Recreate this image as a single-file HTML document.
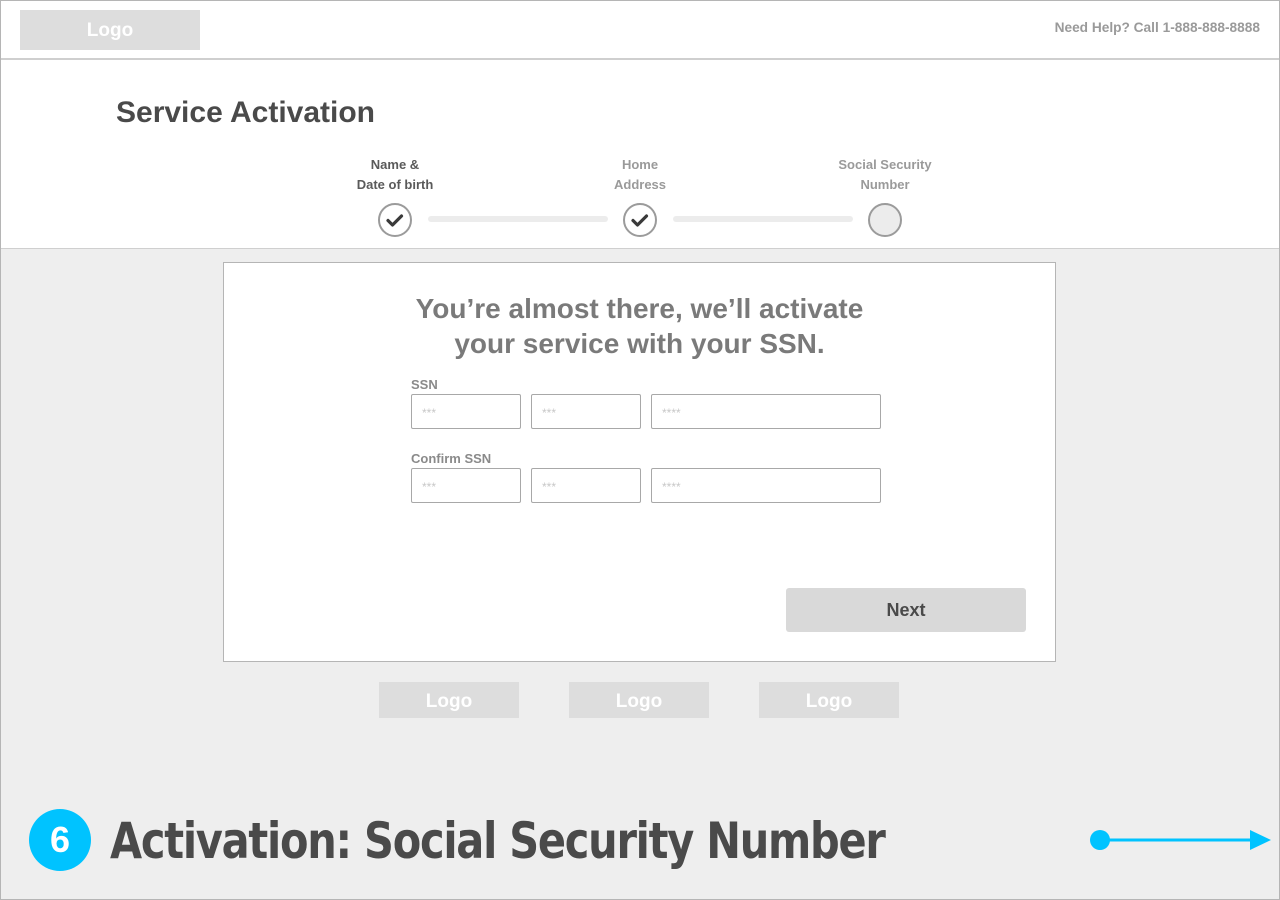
<!DOCTYPE html>
<html><head><meta charset="utf-8"><style>
*{margin:0;padding:0;box-sizing:border-box}
body{width:1280px;height:900px;position:relative;background:#eeeeee;font-family:"Liberation Sans",sans-serif;overflow:hidden}
.abs{position:absolute}
.frame{left:0;top:0;width:1280px;height:900px;border:1px solid #b5b5b5;z-index:10;pointer-events:none}
.top{left:0;top:0;width:1280px;height:249px;background:#fff;border-bottom:1px solid #cfcfcf}
.hl{left:0;top:58px;width:1280px;height:2px;background:#cfcfcf}
.logo{background:#dddddd;color:#fff;font-weight:bold;text-align:center}
.step{font-size:13px;font-weight:bold;text-align:center;line-height:20px;width:140px}
.circ{width:34px;height:34px;border:2px solid #9b9b9b;border-radius:50%;background:#fff}
.bar{height:6px;background:#ececec;border-radius:3px}
.card{left:223px;top:262px;width:833px;height:400px;background:#fff;border:1px solid #b5b5b5}
.lbl{font-size:13px;font-weight:bold;color:#8a8a8a}
.in{height:35px;border:1px solid #a8a8a8;border-radius:2px;background:#fff;color:#c8c8c8;font-size:12px;padding:12px 0 0 10px;line-height:12px}
</style></head><body>
<div class="abs top"></div>
<div class="abs hl"></div>
<div class="abs logo" style="left:20px;top:10px;width:180px;height:40px;font-size:19px;line-height:42px">Logo</div>
<div class="abs" style="right:20px;top:20px;font-size:13.7px;font-weight:bold;color:#9a9a9a">Need Help? Call 1-888-888-8888</div>
<div class="abs" style="left:116px;top:96px;font-size:30px;font-weight:bold;color:#4a4a4a">Service Activation</div>
<div class="abs step" style="left:325px;top:155px;color:#5a5a5a">Name &amp;<br>Date of birth</div>
<div class="abs step" style="left:570px;top:155px;color:#9a9a9a">Home<br>Address</div>
<div class="abs step" style="left:815px;top:155px;color:#9a9a9a">Social Security<br>Number</div>
<div class="abs circ" style="left:378px;top:203px"><svg width="30" height="30" viewBox="0 0 30 30"><path d="M8 15.5l4.5 4.5 9-9" fill="none" stroke="#3a3a3a" stroke-width="3.2" stroke-linecap="round" stroke-linejoin="round"/></svg></div>
<div class="abs bar" style="left:428px;top:216px;width:180px"></div>
<div class="abs circ" style="left:623px;top:203px"><svg width="30" height="30" viewBox="0 0 30 30"><path d="M8 15.5l4.5 4.5 9-9" fill="none" stroke="#3a3a3a" stroke-width="3.2" stroke-linecap="round" stroke-linejoin="round"/></svg></div>
<div class="abs bar" style="left:673px;top:216px;width:180px"></div>
<div class="abs circ" style="left:868px;top:203px;background:#ececec"></div>

<div class="abs card"></div>
<div class="abs" style="left:223px;top:291px;width:833px;text-align:center;font-size:28px;font-weight:bold;color:#7a7a7a;line-height:35px">You’re almost there, we’ll activate<br>your service with your SSN.</div>
<div class="abs lbl" style="left:411px;top:377px">SSN</div>
<div class="abs in" style="left:411px;top:394px;width:110px">***</div>
<div class="abs in" style="left:531px;top:394px;width:110px">***</div>
<div class="abs in" style="left:651px;top:394px;width:230px">****</div>
<div class="abs lbl" style="left:411px;top:451px">Confirm SSN</div>
<div class="abs in" style="left:411px;top:468px;width:110px">***</div>
<div class="abs in" style="left:531px;top:468px;width:110px">***</div>
<div class="abs in" style="left:651px;top:468px;width:230px">****</div>
<div class="abs" style="left:786px;top:588px;width:240px;height:44px;background:#d9d9d9;border-radius:3px;text-align:center;line-height:44px;font-size:18px;font-weight:bold;color:#4a4a4a">Next</div>

<div class="abs logo" style="left:379px;top:682px;width:140px;height:36px;font-size:19px;line-height:40px">Logo</div>
<div class="abs logo" style="left:569px;top:682px;width:140px;height:36px;font-size:19px;line-height:40px">Logo</div>
<div class="abs logo" style="left:759px;top:682px;width:140px;height:36px;font-size:19px;line-height:40px">Logo</div>

<div class="abs" style="left:29px;top:809px;width:62px;height:62px;border-radius:50%;background:#00c3ff;color:#fff;font-size:36px;font-weight:bold;text-align:center;line-height:62px">6</div>
<div class="abs" style="left:110px;top:810px;font-size:50px;font-weight:bold;color:#4a4a4a;line-height:62px;font-family:'DejaVu Sans','Liberation Sans',sans-serif;letter-spacing:-1.5px;white-space:nowrap;transform:scaleX(0.83);transform-origin:0 0">Activation: Social Security Number</div>
<svg class="abs" style="left:1088px;top:828px" width="186" height="26"><circle cx="12" cy="12" r="10" fill="#00c3ff"/><line x1="12" y1="12" x2="165" y2="12" stroke="#00c3ff" stroke-width="3"/><path d="M162 2L183 12L162 22Z" fill="#00c3ff"/></svg>
<div class="abs frame"></div>
</body></html>
